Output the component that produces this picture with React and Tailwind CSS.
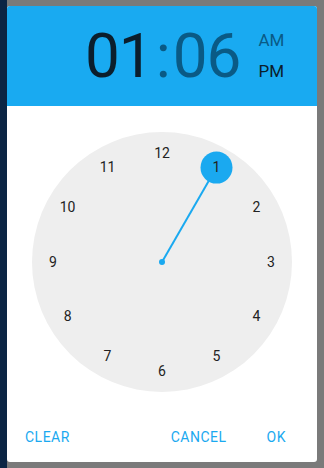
const hours = [12, 1, 2, 3, 4, 5, 6, 7, 8, 9, 10, 11];

const ClockFace = ({selected = 1}) => {
    const r = 109;
    const c = 130;
    const a = (selected % 12) * Math.PI / 6;
    const sx = c + r * Math.sin(a);
    const sy = c - r * Math.cos(a);

    return (
        <div className="relative w-[260px] h-[260px] rounded-full bg-[#eeeeee]">
            <svg className="absolute inset-0" width="260" height="260">
                <line x1={c} y1={c} x2={sx} y2={sy} stroke="#1aa9f0" strokeWidth="2"/>
                <circle cx={c} cy={c} r="3" fill="#1aa9f0"/>
                <circle cx={sx} cy={sy} r="16" fill="#1aa9f0"/>
            </svg>
            {hours.map((h, i) => {
                const ang = i * Math.PI / 6;
                const x = c + r * Math.sin(ang);
                const y = c - r * Math.cos(ang);
                return (
                    <span
                        key={h}
                        className="absolute w-8 h-8 -ml-4 -mt-4 flex items-center justify-center text-[14px] text-[#222]"
                        style={{left: x, top: y}}
                    >
                        {h}
                    </span>
                );
            })}
        </div>
    );
};

export default function App() {
    return (
        <div className="w-[324px] h-[468px] flex bg-[#7a7a7a] overflow-hidden" style={{fontFamily: "Roboto, 'Liberation Sans', sans-serif"}}>
            <div className="w-[7px] h-full bg-[#0b2544]"/>
            <div className="pt-[6px]">
                <div className="w-[310px] h-[456px] bg-white rounded-[3px] overflow-hidden flex flex-col">
                    <div className="h-[100px] bg-[#19aaf1] flex items-center pl-[78px]">
                        <div className="flex items-baseline text-[62px] leading-none tracking-[-1px]">
                            <span className="text-[#0b1e2c]">01</span>
                            <span className="text-[#0a5a85] mx-[3px]">:</span>
                            <span className="text-[#0a5a85]">06</span>
                        </div>
                        <div className="ml-[18px] flex flex-col gap-[14px] text-[17px] leading-none">
                            <span className="text-[#0a5a85]">AM</span>
                            <span className="text-[#0b1e2c]">PM</span>
                        </div>
                    </div>
                    <div className="flex justify-center pt-[26px]">
                        <ClockFace selected={1}/>
                    </div>
                    <div className="mt-auto h-[54px] pt-[4px] flex items-center pl-[18px] pr-[31px] text-[14px] tracking-[0.5px] text-[#1aa9f0]">
                        <button>CLEAR</button>
                        <button className="ml-auto">CANCEL</button>
                        <button className="ml-[40px]">OK</button>
                    </div>
                </div>
            </div>
        </div>
    );
}
